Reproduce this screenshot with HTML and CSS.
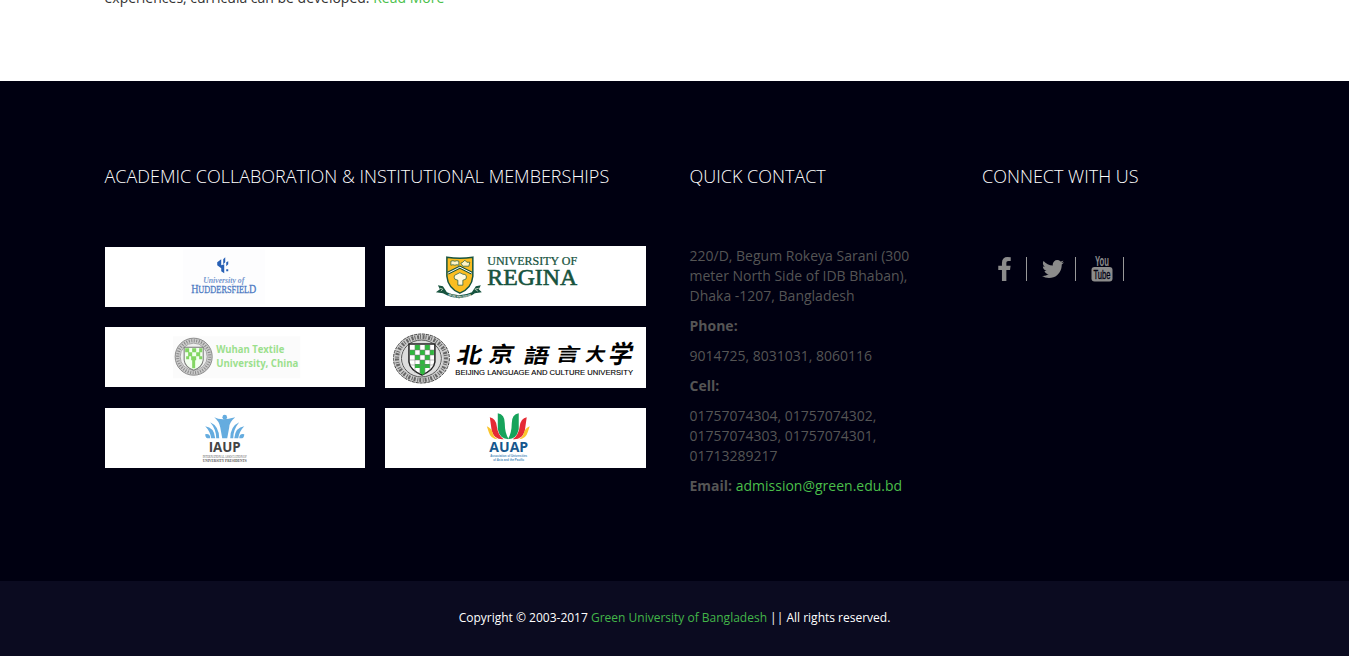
FILE: index.html
```html
<!DOCTYPE html>
<html lang="en">
<head>
<meta charset="utf-8">
<title>Green University of Bangladesh</title>
<link rel="stylesheet" href="styles.css">
</head>
<body>
<main class="intro">
  <div class="container"><p class="intro-text">experiences, curricula can be developed. <a href="#">Read More</a></p></div>
</main>
<footer>
  <div class="footer-main">
    <div class="container columns">
      <section class="column">
        <h3>ACADEMIC COLLABORATION &amp; INSTITUTIONAL MEMBERSHIPS</h3>
        <div class="logos">
          <svg class="logo" viewBox="105 247 260 60" role="img" aria-label="University of Huddersfield">
            <path fill="#fdfdfe" d="M183 249h82v55h-82z"/>
            <g fill="#2860b5"><path d="M217 262l4-3v6l3-1v9l-3-2v-3l-4-3zM223 259l2-2v5l-2 2zM226 262l2-1v3l-2 2zM226 269h2v2h-2z"/></g>
            <g fill="#4a78c2" font-family="Liberation Serif, serif">
              <text x="203" y="283" font-size="9" font-style="italic" font-weight="bold" textLength="41" lengthAdjust="spacingAndGlyphs" fill="#7597ce">University of</text>
              <text x="191" y="292.500" font-size="12" stroke="#4a78c2" stroke-width=".25" textLength="65" lengthAdjust="spacingAndGlyphs">H<tspan font-size="10">UDDERSFIEL</tspan>D</text>
            </g>
          </svg>
          <svg class="logo logo-raised" viewBox="385 246 261 60" role="img" aria-label="University of Regina">
            <path d="M438 285l5 1 4 6q12 6 25 0l4-6 5-1-2 4 3 3-7 1-3 2q-13 6-25 0l-4-2-7-1 4-3z" fill="#17533e"/>
            <path d="M440 288l3 1-2 2M479 288l-4 1 3 2" fill="none" stroke="#adc3ae"/>
            <path d="M447 257q13 2 26 0v19q-1 12-13 17-12-5-13-17z" fill="#fbbd21" stroke="#17533e" stroke-width="1.500"/>
            <path d="M448 273l12-6 12 6" fill="none" stroke="#17533e" stroke-width="3"/>
            <path d="M448 273l12-6 12 6" fill="none" stroke="#fff"/>
            <path d="M451 261q2-1 4 0 2-1 4 0v4q-2-1-4 0-2-1-4 0z" fill="#fff4c4" stroke="#17533e" stroke-width=".7"/>
            <path d="M461 263l2-1 2-2 2 2 3 0-1 4h-6z" fill="#fff4c4" stroke="#17533e" stroke-width=".7"/>
            <path d="M455 279q-2-4 2-5 3-3 6 0 5 0 3 5l-3 1v5h-5v-5z" fill="#fff9dc" stroke="#17533e" stroke-width=".7"/>
            <path id="motto" d="M448 295q12 5 25 0" fill="none"/>
            <text font-family="Liberation Sans, sans-serif" font-size="3" font-weight="bold" fill="#fff"><textPath href="#motto" textLength="24" lengthAdjust="spacingAndGlyphs">AS ONE WHO SERVES</textPath></text>
            <g fill="#17533e" font-family="Liberation Serif, serif">
              <text x="487.500" y="265" font-size="12" stroke="#17533e" stroke-width=".25" textLength="90" lengthAdjust="spacingAndGlyphs">UNIVERSITY OF</text>
              <text x="487.500" y="285" font-size="24" stroke="#17533e" stroke-width=".6" textLength="90" lengthAdjust="spacingAndGlyphs">REGINA</text>
            </g>
          </svg>
          <svg class="logo" viewBox="105 327 260 60" role="img" aria-label="Wuhan Textile University, China">
            <path fill="#fbfbfb" d="M173 336h127v42H173z"/>
            <circle cx="193.500" cy="356.500" r="16" fill="none" stroke="#ccc" stroke-width="5"/>
            <circle cx="193.500" cy="356.500" r="16" fill="none" stroke="#888" stroke-width="3" stroke-dasharray="1 1.500"/>
            <circle cx="193.500" cy="356.500" r="18.500" fill="none" stroke="#777" stroke-width=".8"/>
            <circle cx="193.500" cy="356.500" r="13.500" fill="#eee" stroke="#888" stroke-width=".7"/>
            <path d="M184 347h19v13q-1 7-9.500 10-8.500-3-9.500-10z" fill="#f3fff0" stroke="#777"/>
            <path d="M185 348h4v4h-4zM192 348h4v4h-4zM199 348h3v4h-3zM188 352h4v4h-4zM196 352h4v4h-4zM191 356h5v4h-5zM186 356h3v3h-3zM199 356h3v3h-3zM192 360h3v8h-3z" fill="#83d663"/>
            <g fill="#9be08d" font-family="Open Sans, sans-serif" font-size="10" font-weight="700">
              <text x="216" y="353" textLength="68" lengthAdjust="spacingAndGlyphs">Wuhan Textile</text>
              <text x="216" y="367" textLength="82" lengthAdjust="spacingAndGlyphs">University, China</text>
            </g>
          </svg>
          <svg class="logo logo-tall" viewBox="385 327 261 61" role="img" aria-label="Beijing Language and Culture University">
            <ellipse cx="421.500" cy="358.500" rx="24.500" ry="21.500" fill="none" stroke="#ccc" stroke-width="7"/>
            <ellipse cx="421.500" cy="358.500" rx="24.500" ry="21.500" fill="none" stroke="#666" stroke-width="4" stroke-dasharray="1 1.600 2 1"/>
            <ellipse cx="421.500" cy="358.500" rx="28" ry="24.500" fill="none" stroke="#444" stroke-dasharray="3 1"/>
            <ellipse cx="421.500" cy="358.500" rx="20" ry="18.500" fill="#ddd" stroke="#555"/>
            <path d="M409 344h26v18q-1 8-13 13-12-5-13-13z" fill="#fff" stroke="#222" stroke-width="1.500"/>
            <path d="M415 345h5v5h-5zM425 345h5v5h-5zM410 350h5v5h-5zM420 350h5v5h-5zM430 350h4v5h-4zM415 355h5v5h-5zM425 355h5v5h-5zM420 360h5v13l-2 2-3-2zM415 364h5v4h-5zM425 364h5v4h-5z" fill="#2fb83e"/>
            <path d="M415 345v28M420 345v29M425 345v29M430 345v26M410 350h24M410 355h24M410 360h24M410 365h24" stroke="#777" stroke-width=".5"/>
            <g font-family="Noto Sans CJK SC, sans-serif" font-weight="700" fill="#000">
              <text transform="translate(456 363) skewX(-12) scale(1.05 .9)" font-size="24">北</text>
              <text transform="translate(488 362) skewX(-12) scale(1.05 .9)" font-size="24">京</text>
              <text transform="translate(523 363) skewX(-12) scale(1.05 .85)" font-size="24">語</text>
              <text transform="translate(555 361) skewX(-12) scale(1.05 .8)" font-size="23">言</text>
              <text transform="translate(585 361) skewX(-12) scale(.9 .85)" font-size="22">大</text>
              <text transform="translate(608 363) skewX(-12) scale(1 1.05)" font-size="24">学</text>
            </g>
            <text x="455.500" y="375" font-family="Liberation Sans, sans-serif" font-size="6.500" stroke="#000" stroke-width=".1" textLength="178" lengthAdjust="spacingAndGlyphs">BEIJING LANGUAGE AND CULTURE UNIVERSITY</text>
          </svg>
          <svg class="logo" viewBox="105 408 260 60" role="img" aria-label="IAUP">
            <g fill="#65acdf"><circle cx="224.500" cy="417" r="2.300"/><path d="M214 417q7 4 21 0-6 5-6 10l-2 11h-5l-2-11q-1-6-6-10zM210 422q9 4 9 16h-3q0-9-6-16zM239 422q-9 4-9 16h3q0-9 6-16zM205 426q9 1 10 12h-4q-1-7-6-12zM244 426q-9 1-10 12h4q1-7 6-12zM205 434q5-1 5 4-5 1-5-4zM244 434q-5-1-5 4 5 1 5-4z"/></g>
            <text x="208.500" y="452" font-family="Open Sans, sans-serif" font-size="13.500" font-weight="700" fill="#444" textLength="32" lengthAdjust="spacingAndGlyphs">IAUP</text>
            <g font-family="Liberation Serif, serif" fill="#555">
              <text x="202.500" y="458" font-size="3.500" textLength="44" lengthAdjust="spacingAndGlyphs">INTERNATIONAL ASSOCIATION OF</text>
              <text x="202.500" y="462" font-size="4.500" font-weight="700" textLength="44" lengthAdjust="spacingAndGlyphs">UNIVERSITY PRESIDENTS</text>
            </g>
          </svg>
          <svg class="logo" viewBox="385 408 261 60" role="img" aria-label="AUAP">
            <path fill="#16a35b" d="M498 413q7 1 7 10 0 10 4 16-9 0-11-10zM519 413q-7 1-7 10 0 10-4 16 9 0 11-10z"/>
            <path fill="#e52b35" d="M490 417q6 1 7 9 1 9 7 13-9 1-12-8zM527 417q-6 1-7 9-1 9-7 13 9 1 12-8z"/>
            <path fill="#fac52d" d="M487 426q5 2 6 7 1 4 5 6-7 0-9-7zM530 426q-5 2-6 7-1 4-5 6 7 0 9-7z"/>
            <text x="489.500" y="452" font-family="Open Sans, sans-serif" font-size="14" font-weight="700" fill="#16578d" textLength="39" lengthAdjust="spacingAndGlyphs">AUAP</text>
            <g font-family="Liberation Sans, sans-serif" font-size="3.300" font-weight="700" fill="#4c8bbb">
              <text x="490.500" y="456.500" textLength="37" lengthAdjust="spacingAndGlyphs">Association of Universities</text>
              <text x="493.500" y="460.500" textLength="31" lengthAdjust="spacingAndGlyphs">of Asia and the Pacific</text>
            </g>
          </svg>
        </div>
      </section>
      <section class="column contact">
        <h3>QUICK CONTACT</h3>
        <p>220/D, Begum Rokeya Sarani (300 meter North Side of IDB Bhaban), Dhaka -1207, Bangladesh</p>
        <p><strong>Phone:</strong></p>
        <p>9014725, 8031031, 8060116</p>
        <p><strong>Cell:</strong></p>
        <p>01757074304, 01757074302, 01757074303, 01757074301, 01713289217</p>
        <p><strong>Email:</strong> <a href="#">admission@green.edu.bd</a></p>
      </section>
      <section class="column">
        <h3>CONNECT WITH US</h3>
        <div class="social">
          <a href="#" aria-label="Facebook"><svg class="icon-facebook" viewBox="479 0 864 1664"><path d="M1343 12v264h-157q-86 0-116 36t-30 108v189h293l-39 296h-254v759h-306v-759h-255v-296h255v-218q0-186 104-288.500t277-102.500q147 0 228 12z"/></svg></a>
          <a href="#" aria-label="Twitter"><svg class="icon-twitter" viewBox="108 256 1576 1280"><path d="M1684 408q-67 98-162 167 1 14 1 42 0 130-38 259.500t-115.500 248.500-184.500 210.500-258 146-323 54.500q-271 0-496-145 35 4 78 4 225 0 401-138-105-2-188-64.500t-114-159.500q33 5 61 5 43 0 85-11-112-23-185.500-111.500t-73.500-205.500v-4q68 38 146 41-66-44-105-115t-39-154q0-88 44-163 121 149 294.500 238.500t371.500 99.500q-8-38-8-74 0-134 94.500-228.500t228.500-94.500q140 0 236 102 109-21 205-78-37 115-142 178 93-10 186-50z"/></svg></a>
          <a href="#" aria-label="YouTube"><svg class="icon-youtube" viewBox="0 0 22 26"><rect x=".5" y="11" width="21" height="14.500" rx="3"/><g font-family="Liberation Sans, sans-serif"><text x="4" y="9.800" font-size="14" font-weight="700" textLength="14" lengthAdjust="spacingAndGlyphs">You</text><text class="tube" x="2.500" y="22.800" font-size="13" textLength="17" lengthAdjust="spacingAndGlyphs">Tube</text></g></svg></a>
        </div>
      </section>
    </div>
  </div>
  <div class="copyright">Copyright © 2003-2017 <a href="#">Green University of Bangladesh</a> || All rights reserved.</div>
</footer>
</body>
</html>
```
FILE: styles.css
```css
* { box-sizing: border-box; }
body { margin: 0; overflow: hidden; background: #fff; color: #333; font: 14px/20px "Open Sans", sans-serif; }
a { color: #4abf4a; text-decoration: none; }
.container { width: 1170px; margin: 0 auto; padding: 0 15px; }
.intro { height: 81px; }
.intro-text { margin: 0; transform: translateY(-12px); }
.footer-main { height: 500px; padding-top: 85px; background: #000011; }
.columns { display: grid; grid-template-columns: 585px 292.5px 292.5px; padding: 0; }
.column { padding: 0 15px; }
h3 { margin: 0 0 60.5px; color: #fff; font-size: 18px; font-weight: 300; line-height: 20px; white-space: nowrap; }
.logos { display: grid; grid-template-columns: repeat(2, 260.5px); grid-auto-rows: 60.4px; gap: 20.2px 20px; }
.logo { display: block; width: 100%; height: 100%; background: #fff; }
.logo-raised { margin-top: -1px; }
.logo-tall { height: 61px; }
.contact { color: #555; }
.contact p { margin: 0 0 10px; }
.contact h3 { margin-bottom: 60px; }
.contact p:first-of-type { width: 235px; }
.social { display: flex; padding-top: 10px; }
.social a { display: flex; align-items: center; justify-content: center; height: 24px; border-right: 1px solid #999; }
.social a:nth-child(1) { width: 45px; padding-left: 1px; }
.social a:nth-child(2), .social a:nth-child(3) { width: 49px; padding-left: 3px; }
.social a:nth-child(3) { width: 48px; padding-left: 4px; }
.social svg { display: block; fill: #8b8b8b; overflow: visible; flex: none; }
.icon-facebook { width: 13px; height: 24px; }
.icon-twitter { width: 22px; height: 18px; }
.icon-youtube { width: 22px; height: 26px; }
.icon-youtube .tube { fill: #000011; stroke: #000011; stroke-width: .3; }
.copyright { height: 75px; padding-top: 27px; background: #0b0b20; color: #fff; font-size: 12px; text-align: center; }
.copyright a { color: #43b649; }
```
